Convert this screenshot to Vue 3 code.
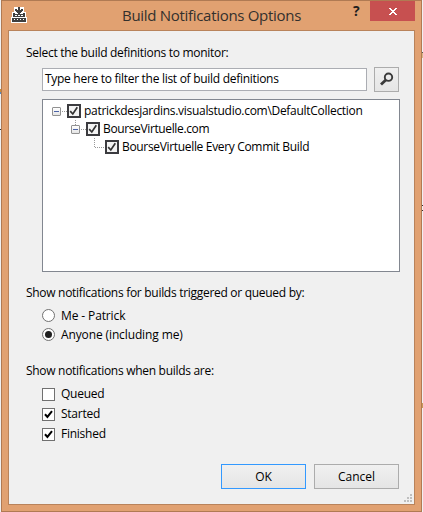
<script setup>
const tree = [
  { label: 'patrickdesjardins.visualstudio.com\\DefaultCollection', level: 0 },
  { label: 'BourseVirtuelle.com', level: 1 },
  { label: 'BourseVirtuelle Every Commit Build', level: 2 },
]
const triggers = [
  { label: 'Me - Patrick', on: false },
  { label: 'Anyone (including me)', on: true },
]
const states = [
  { label: 'Queued', on: false },
  { label: 'Started', on: true },
  { label: 'Finished', on: true },
]
</script>

<template>
  <div class="desktop">
    <div class="window">
      <header class="titlebar">
        <svg class="app-icon" width="16" height="16" viewBox="0 0 16 16" shape-rendering="crispEdges">
          <path fill="#fff" d="M3 0h10v5h2v5h1v6H0v-6h1V5h2z" />
          <path fill="#3f3f3f" d="M7 0h2v3h1V2h2v2h-1v1h-1v1H9v1H7V6H6V5H5V4H4V2h2v1h1zM2 6h2v1h8V6h2v4H2zM1 11h14v4H1z" />
          <path fill="#fff" d="M6 6h1v1H6zM9 6h1v1H9zM4 8h2v1H4zM7 8h2v1H7zM10 8h2v1h-2zM3 12h1v1H3zM6 12h1v1H6zM9 12h1v1H9zM12 12h1v1h-1z" />
        </svg>
        <h1 class="title"><span>Build Notifications Options</span></h1>
        <span class="help">?</span>
        <button class="close" aria-label="Close">
          <svg width="8" height="7" viewBox="0 0 8 7" shape-rendering="crispEdges">
            <path fill="#fff" d="M0 0h2v1h1v1h2V1h1V0h2v1H7v1H6v1H5v1h1v1h1v1h1v1H6V6H5V5H3v1H2v1H0V6h1V5h1V4h1V3H2V2H1V1H0z" />
          </svg>
        </button>
      </header>

      <main class="body">
        <p class="heading h-select">Select the build definitions to monitor:</p>
        <div class="filter-row">
          <div class="filter"><span>Type here to filter the list of build definitions</span></div>
          <button class="search" aria-label="Search">
            <svg width="15" height="15" viewBox="0 0 15 15" fill="none" stroke="#3a3a3a">
              <circle cx="9.5" cy="5.2" r="3.7" stroke-width="1.9" />
              <path d="M6.8 8.1L2 12.6" stroke-width="2.8" />
            </svg>
          </button>
        </div>

        <div class="tree">
          <div v-for="n in tree" :key="n.label" class="node" :class="'level-' + n.level">
            <span v-if="n.level < 2" class="expander"></span>
            <span class="link"></span>
            <span class="tree-check">
              <svg width="10" height="10" viewBox="0 0 10 10" fill="none" stroke="#333" stroke-width="1.7">
                <path d="M1.2 5.2L3.8 8L8.3 1.2" />
              </svg>
            </span>
            <span class="node-label">{{ n.label }}</span>
          </div>
        </div>

        <p class="heading h-trigger">Show notifications for builds triggered or queued by:</p>
        <div class="options radios">
          <label v-for="t in triggers" :key="t.label" class="option">
            <svg width="13" height="13" viewBox="0 0 13 13">
              <circle cx="6.5" cy="6.5" r="6" fill="#fff" stroke="#707070" />
              <circle v-if="t.on" cx="6.5" cy="6.5" r="3.5" fill="#212121" />
            </svg>
            <span>{{ t.label }}</span>
          </label>
        </div>

        <p class="heading h-state">Show notifications when builds are:</p>
        <div class="options checks">
          <label v-for="s in states" :key="s.label" class="option">
            <svg width="13" height="13" viewBox="0 0 13 13">
              <rect x=".5" y=".5" width="12" height="12" fill="#fff" stroke="#707070" />
              <path v-if="s.on" d="M3 6.3L5.4 8.9L10 3.2" fill="none" stroke="#000" stroke-width="2" />
            </svg>
            <span>{{ s.label }}</span>
          </label>
        </div>

        <footer class="actions">
          <button class="btn primary"><span>OK</span></button>
          <button class="btn"><span>Cancel</span></button>
        </footer>
        <svg class="grip" width="8" height="8" viewBox="0 0 8 8" fill="#bfbfbf" shape-rendering="crispEdges">
          <path d="M6 0h2v2H6zM3 3h2v2H3zM6 3h2v2H6zM0 6h2v2H0zM3 6h2v2H3zM6 6h2v2H6z" />
        </svg>
      </main>
    </div>
  </div>
</template>

<style>
body {
  margin: 0;
  overflow: hidden;
}
</style>

<style scoped>
* {
  box-sizing: border-box;
}
.desktop {
  width: 423px;
  height: 512px;
  padding: 0 1px;
  background:
    linear-gradient(#555, #555) 422px 52px / 1px 1px no-repeat,
    linear-gradient(#d9b98a, #d9b98a) 422px 53px / 1px 5px no-repeat,
    linear-gradient(#333, #333) 422px 205px / 1px 1px no-repeat,
    linear-gradient(#333, #333) 422px 210px / 1px 1px no-repeat,
    linear-gradient(#c99a5a, #c99a5a) 422px 403px / 1px 5px no-repeat,
    linear-gradient(#c98a3a, #c98a3a) 0 89px / 1px 3px no-repeat,
    linear-gradient(#5b86b8, #5b86b8) 0 92px / 1px 2px no-repeat,
    linear-gradient(#333, #333) 0 129px / 1px 1px no-repeat,
    #f0f0f2;
  font-family: 'Open Sans', 'Noto Sans', sans-serif;
  font-size: 12px;
  line-height: 16px;
  color: #000;
}
.window {
  width: 421px;
  height: 512px;
  padding: 0 6px 6px;
  border: 1px solid #b07a53;
  background: #e1a171;
}
.titlebar {
  display: flex;
  height: 29px;
  align-items: flex-start;
}
.app-icon {
  margin: 6px 0 0 3px;
  flex: none;
}
.title {
  flex: none;
  width: 231px;
  margin: 4px 0 0 95px;
  font-size: 15px;
  line-height: 21px;
  font-weight: 400;
  letter-spacing: -0.3px;
  white-space: nowrap;
  color: #33302d;
}
.help {
  width: 17px;
  font-size: 14px;
  font-weight: 700;
  line-height: 20px;
  color: #1e1e1e;
}
button {
  display: flex;
  align-items: center;
  justify-content: center;
  padding: 0;
  font: inherit;
  color: #000;
}
.close {
  width: 45px;
  height: 20px;
  flex: none;
  border: 0;
  background: #c75050;
  padding-top: 1px;
}
.body {
  position: relative;
  height: 475px;
  padding: 13px 13px 0 17px;
  border: 1px solid #b9835b;
  background: #f0f0f0;
}
.heading {
  margin: 0;
  height: 18px;
  line-height: 18px;
  white-space: nowrap;
  letter-spacing: -0.29px;
}
.filter-row {
  display: flex;
  align-items: center;
  justify-content: space-between;
  height: 25px;
  margin: 5px 2px 7px 16px;
}
.filter {
  width: 325px;
  height: 23px;
  padding: 2px 0 0 2px;
  border: 1px solid #abadb3;
  background: #fff;
  white-space: nowrap;
  letter-spacing: -0.29px;
}
.search {
  width: 25px;
  height: 25px;
  border: 1px solid #acacac;
  background: linear-gradient(#f0f0f0, #e5e5e5);
}
.tree {
  width: 358px;
  height: 173px;
  margin-left: 16px;
  padding: 2px 0 0 9px;
  border: 1px solid #828790;
  background: #fff;
}
.node {
  display: flex;
  align-items: center;
  height: 18px;
  white-space: nowrap;
  letter-spacing: -0.33px;
}
.level-0 {
  letter-spacing: -0.29px;
}
.level-1 {
  padding-left: 19px;
  letter-spacing: -0.37px;
  background: repeating-linear-gradient(#999 0 1px, transparent 1px 2px) 23px 0 / 1px 5px no-repeat;
}
.level-2 {
  padding-left: 42px;
  background: repeating-linear-gradient(#999 0 1px, transparent 1px 2px) 42px 0 / 1px 10px no-repeat;
}
.expander {
  width: 9px;
  height: 9px;
  margin-top: 1px;
  border: 1px solid #919191;
  border-radius: 1px;
  background: linear-gradient(#4b63a7, #4b63a7) 1px 3px / 5px 1px no-repeat, linear-gradient(#fff, #e4e4e4);
}
.link {
  width: 6px;
  height: 1px;
  margin-top: 1px;
  background: repeating-linear-gradient(90deg, transparent 0 1px, #999 1px 2px);
}
.level-2 .link {
  width: 11px;
}
.tree-check {
  display: flex;
  width: 14px;
  height: 14px;
  border: 2px solid #3b3b3f;
  background: #f3f3f3;
}
.node-label {
  margin-left: 3px;
}
.h-trigger {
  margin-top: 12px;
}
.options {
  display: flex;
  flex-direction: column;
  padding-left: 16px;
}
.option {
  display: flex;
  align-items: center;
  gap: 6px;
  white-space: nowrap;
  letter-spacing: -0.25px;
}
.radios {
  margin-top: 4px;
}
.radios .option {
  height: 19px;
  letter-spacing: -0.12px;
}
.h-state {
  margin-top: 18px;
}
.checks {
  margin-top: 4px;
}
.checks .option {
  height: 20px;
}
.option svg {
  flex: none;
}
.actions {
  display: flex;
  justify-content: flex-end;
  gap: 8px;
  margin: 20px 2px 0 0;
}
.btn {
  width: 85px;
  height: 25px;
  border: 1px solid #acacac;
  background: linear-gradient(#f0f0f0, #e5e5e5);
}
.primary {
  border-color: #3399ff;
}
.grip {
  position: absolute;
  right: 2px;
  bottom: 2px;
}
</style>
